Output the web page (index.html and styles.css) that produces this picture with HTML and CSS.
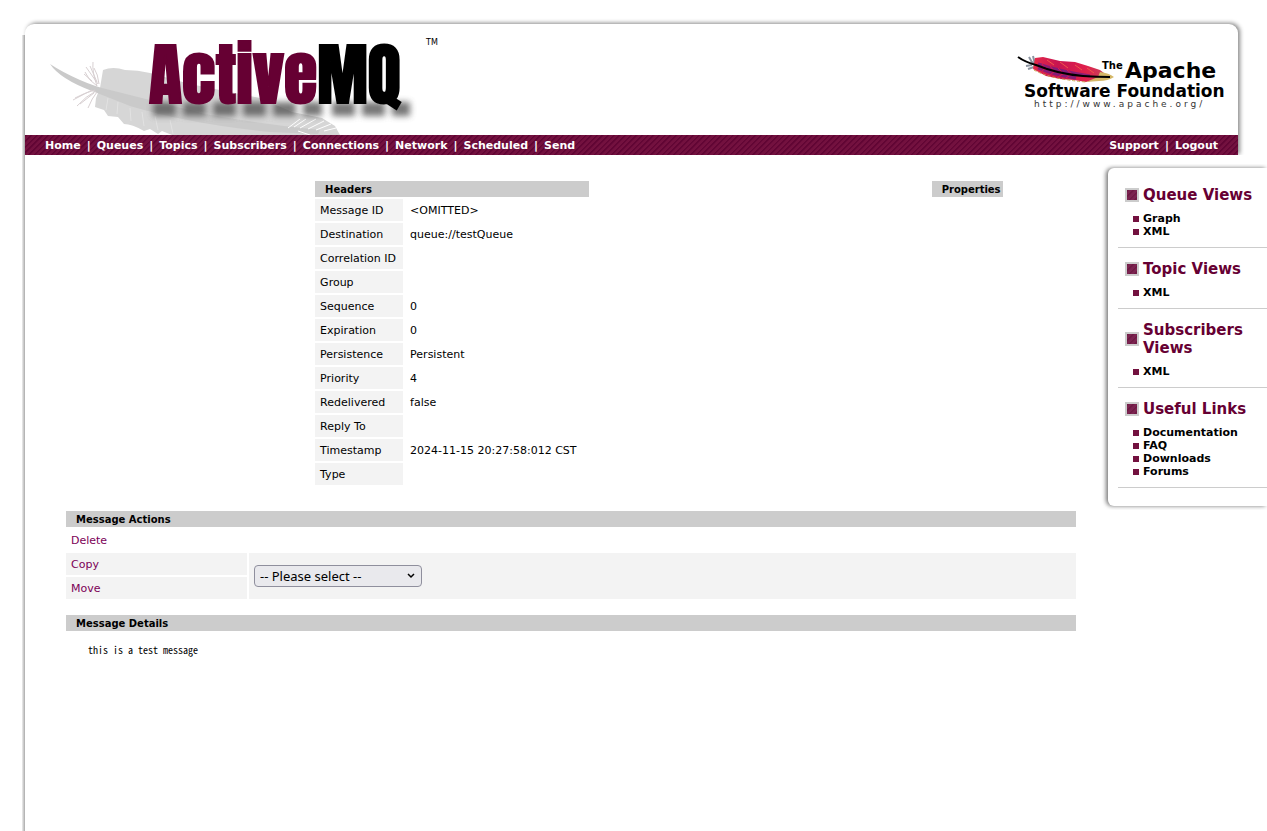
FILE: index.html
```html
<!DOCTYPE html>
<html lang="en">
<head>
<meta charset="utf-8">
<title>ActiveMQ - Message</title>
<link rel="stylesheet" href="styles.css">
</head>
<body>
<div class="page">
  <header class="banner">
    <div class="logos">
      <div class="brand">
        <svg class="brand-logo" viewBox="25 24 400 111" role="img" aria-label="ActiveMQ">
          <defs>
            <filter id="soft" filterUnits="userSpaceOnUse" x="130" y="85" width="300" height="50"><feGaussianBlur stdDeviation="3"/></filter>
          </defs>
          <path fill="#d6d6d6" d="M103 70 Q113 66 125 70 Q138 70 150 73 L190 84 L260 98 L292 112 L322 118 L335 126 L340 135 L172 135 L162 131 L158 134 L150 129 L144 131 Q132 124 124 124 L118 117 L108 116 L104 110 L95 107 L96 98 L100 88 Z"/>
          <path fill="#cacaca" d="M50 64 Q62 72 80 80 Q96 87 110 90 Q150 100 205 114 Q260 124 320 130 L318 134 L270 132 Q190 124 130 106 Q110 98 92 91 Q60 79 50 64 Z"/>
          <path fill="none" stroke="#d8d0d2" stroke-width="1" d="M97 86 Q88 80 85 72 M97 86 Q92 72 93 62 M98 84 L86 67 M99 84 Q98 74 94 68 M97 82 L90 66 M92 81 L84 74 M95 90 Q84 93 75 98 M96 91 Q86 96 77 106 M97 92 Q92 98 88 108 M92 90 L73 100 M94 93 L80 104"/>
          <path fill="none" stroke="#e2e2e2" d="M108 98 L106 110 M118 102 L117 114 M130 108 L131 121 M142 112 L144 126 M155 116 L158 130 M170 120 L173 134"/>
          <path fill="none" stroke="#fff" d="M294 127 L306 119 M300 128 L316 119 M308 129 L324 121 M316 130 L331 124 M324 131 L336 128 M298 131 L310 135 M288 128 L300 119"/>
          <path fill="none" stroke="#555" stroke-width="14" stroke-dasharray="23 7" opacity=".8" filter="url(#soft)" d="M153 109 L322 109 M332 109 L410 109"/>
          <text class="brand-word" x="149" y="103" fill="#660033" stroke="#660033">Active<tspan fill="#000" stroke="#000">MQ</tspan></text>
        </svg>
        <span class="trademark">TM</span>
      </div>
      <svg class="asf-logo" viewBox="1014 50 216 64" role="img" aria-label="The Apache Software Foundation">
        <defs>
          <linearGradient id="plume" x1="0" x2="1" y1="0" y2="0">
            <stop offset="0" stop-color="#e62a4a"/><stop offset=".35" stop-color="#c81450"/>
            <stop offset=".75" stop-color="#e0204c"/><stop offset="1" stop-color="#c8405a"/>
          </linearGradient>
        </defs>
        <path fill="none" stroke="#8b93a0" stroke-width="2" d="M1033 64 L1029 57 M1035 64 L1033 56 M1032 65 L1026 66 M1034 67 L1028 69 M1035 65 L1031 61"/>
        <path fill="url(#plume)" d="M1035 58 L1043 57 L1060 61 L1075 62 L1088 66 L1100 70 L1104 73 L1100 79 L1086 82 L1074 80 L1060 79 L1046 76 L1033 69 Z"/>
        <path fill="none" stroke="#6d1d86" stroke-width="3" opacity=".75" d="M1038 64 Q1058 71 1090 76 M1038 68 Q1054 75 1076 78"/>
        <path fill="none" stroke="#e0184c" d="M1042 71 L1047 67 M1050 75 L1056 70 M1058 77 L1064 73 M1066 78 L1072 74 M1046 70 L1042 64 M1055 72 L1050 66 M1064 74 L1058 68 M1073 75 L1067 70"/>
        <path fill="none" stroke="#f0564a" d="M1047 60 L1054 65 M1060 62 L1068 68 M1075 65 L1082 70 M1087 68 L1094 73"/>
        <path fill="#d5b868" d="M1100 72 Q1109 73 1114 77 Q1108 81 1099 81 L1086 82 L1098 77 Z"/>
        <path fill="none" stroke="#c9a34c" stroke-dasharray="3 2" d="M1034 70 Q1050 79 1086 82"/>
        <path fill="none" stroke="#000" stroke-width="2" d="M1018 57 Q1025 62 1036 65 Q1058 74 1083 76 Q1098 77 1110 77"/>
        <text class="asf-text" x="1102" y="69" font-size="10">The</text>
        <text class="asf-text" x="1125" y="78" font-size="22">Apache</text>
        <text class="asf-text" x="1024" y="97" font-size="17">Software Foundation</text>
        <text class="asf-url" x="1034" y="107">http://www.apache.org/</text>
      </svg>
    </div>
    <nav class="menu">
      <div class="menu-group"><a href="#">Home</a><span>|</span><a href="#">Queues</a><span>|</span><a href="#">Topics</a><span>|</span><a href="#">Subscribers</a><span>|</span><a href="#">Connections</a><span>|</span><a href="#">Network</a><span>|</span><a href="#">Scheduled</a><span>|</span><a href="#">Send</a></div>
      <div class="menu-group"><a href="#">Support</a><span>|</span><a href="#">Logout</a></div>
    </nav>
  </header>
  <div class="columns">
    <main class="content">
      <div class="info">
        <table class="grid headers">
          <thead><tr><th colspan="2">Headers</th></tr></thead>
          <tbody>
            <tr><td class="label">Message ID</td><td>&lt;OMITTED&gt;</td></tr>
            <tr><td class="label">Destination</td><td>queue://testQueue</td></tr>
            <tr><td class="label">Correlation ID</td><td></td></tr>
            <tr><td class="label">Group</td><td></td></tr>
            <tr><td class="label">Sequence</td><td>0</td></tr>
            <tr><td class="label">Expiration</td><td>0</td></tr>
            <tr><td class="label">Persistence</td><td>Persistent</td></tr>
            <tr><td class="label">Priority</td><td>4</td></tr>
            <tr><td class="label">Redelivered</td><td>false</td></tr>
            <tr><td class="label">Reply To</td><td></td></tr>
            <tr><td class="label">Timestamp</td><td>2024-11-15 20:27:58:012 CST</td></tr>
            <tr><td class="label">Type</td><td></td></tr>
          </tbody>
        </table>
        <table class="grid">
          <thead><tr><th>Properties</th></tr></thead>
        </table>
      </div>
      <table class="grid wide actions">
        <thead><tr><th colspan="2">Message Actions</th></tr></thead>
        <tbody>
          <tr><td colspan="2"><a href="#">Delete</a></td></tr>
          <tr><td class="label action"><a href="#">Copy</a></td>
            <td class="label" rowspan="2"><select class="queue-select" aria-label="Destination queue"><option>-- Please select --</option></select></td></tr>
          <tr><td class="label action"><a href="#">Move</a></td></tr>
        </tbody>
      </table>
      <table class="grid wide">
        <thead><tr><th>Message Details</th></tr></thead>
        <tbody><tr><td class="details"><pre class="message">this is a test message</pre></td></tr></tbody>
      </table>
    </main>
    <aside class="sidebar">
      <section class="views"><h3>Queue Views</h3><ul><li><a href="#">Graph</a></li><li><a href="#">XML</a></li></ul></section>
      <section class="views"><h3>Topic Views</h3><ul><li><a href="#">XML</a></li></ul></section>
      <section class="views"><h3>Subscribers Views</h3><ul><li><a href="#">XML</a></li></ul></section>
      <section class="views"><h3>Useful Links</h3><ul><li><a href="#">Documentation</a></li><li><a href="#">FAQ</a></li><li><a href="#">Downloads</a></li><li><a href="#">Forums</a></li></ul></section>
    </aside>
  </div>
</div>
</body>
</html>
```
FILE: styles.css
```css
*, *::before { box-sizing: border-box; }
body {
  margin: 0;
  background: #fff;
  color: #000;
  font: 10px/14px Verdana, "DejaVu Sans", sans-serif;
  overflow-x: hidden;
}
a { color: inherit; text-decoration: none; }

.page {
  min-height: 100vh;
  padding: 24px 0 0 25px;
  background: linear-gradient(90deg, #eee, #aaa) 22px 35px / 3px 100% no-repeat;
}
.banner {
  margin-right: 29px;
  border-radius: 9px 9px 0 0;
  box-shadow: 2px -1px 4px #888;
  background: #fff;
  clip-path: inset(-8px -8px 0 -3px);
}
.logos {
  display: flex;
  justify-content: space-between;
  align-items: flex-start;
  height: 111px;
}
.brand { display: flex; }
.brand-logo { width: 400px; height: 111px; }
.brand-word {
  font: 68px Impact, Anton, "Roboto Condensed", sans-serif;
  stroke-width: 2px;
}
.trademark { font-size: 8px; line-height: 14px; margin: 12px 0 0 1px; }
.asf-logo { width: 216px; height: 64px; margin: 26px 8px 0 0; }
.asf-text { font-family: Verdana, "DejaVu Sans", sans-serif; font-weight: bold; }
.asf-url { font: 9px Verdana, "DejaVu Sans", sans-serif; letter-spacing: 3px; fill: #333; }

.menu {
  display: flex;
  justify-content: space-between;
  padding: 0 20px;
  color: #fff;
  font-size: 11px;
  font-weight: bold;
  line-height: 22px;
  height: 20px;
  background: repeating-linear-gradient(135deg, #610534 0 1px, #73113f 2px 4px);
}
.menu-group { display: flex; gap: 6px; }

.columns { display: flex; align-items: flex-start; }
.content { flex: 1; min-width: 0; padding: 24px 30px 0 39px; }
.info {
  display: grid;
  grid-template-columns: 7fr 2fr;
  column-gap: 16px;
  justify-items: center;
  align-items: start;
  margin-bottom: 22px;
}
.grid { border-spacing: 2px; }
.headers { width: 278px; }
.headers .label { width: 88px; }
.grid th {
  height: 16px;
  padding: 2px 2px 0 10px;
  background: #ccc;
  text-align: left;
  line-height: 14px;
}
.grid td { height: 22px; padding: 5px 5px 3px; font-size: 11px; }
.grid .label { background: #f3f3f3; }
.wide { width: 100%; margin-bottom: 12px; }
.action { width: 181px; }
.actions a { color: #7c0057; }
.queue-select {
  display: block;
  width: 168px;
  height: 22px;
  margin-bottom: 2px;
  padding: 0 5px;
  appearance: none;
  border: 1px solid #8f8f9d;
  border-radius: 4px;
  background: #e9e9ed url("data:image/svg+xml,%3Csvg xmlns='http://www.w3.org/2000/svg' width='8' height='6'%3E%3Cpath d='M1 1l3 3 3-3' fill='none' stroke='%23000' stroke-width='1.5'/%3E%3C/svg%3E") right 6px center no-repeat;
  color: #000;
  font: 13px "Noto Sans", sans-serif;
}
.grid .details { padding: 10px 22px; }
.message { margin: 0; font: 10px/14px "Noto Sans Mono CJK SC", "Liberation Mono", monospace; }

.sidebar {
  width: 159px;
  margin-top: 13px;
  padding: 6px 0 18px 10px;
  border-radius: 6px 0 0 6px;
  background: #fff;
  box-shadow: -2px 0 4px #777;
  clip-path: inset(-4px 0 -4px -8px);
}
.views {
  padding: 12px 7px 9px;
  border-bottom: 1px solid #ccc;
}
.views h3 {
  display: flex;
  align-items: center;
  gap: 4px;
  margin: 0 0 8px;
  color: #660033;
  font-size: 15px;
  line-height: 18px;
}
.views h3::before {
  content: "";
  flex: none;
  width: 14px;
  height: 14px;
  border: 2px solid #ccc;
  background: repeating-linear-gradient(135deg, #6f1a44 0 1px, #7b2450 2px 4px);
}
.views ul { margin: 0; padding: 0; list-style: none; }
.views li {
  display: flex;
  align-items: center;
  gap: 4px;
  padding-left: 8px;
  font-size: 11px;
  font-weight: bold;
  line-height: 13px;
}
.views li::before { content: ""; width: 6px; height: 6px; background: #73113f; }
```
